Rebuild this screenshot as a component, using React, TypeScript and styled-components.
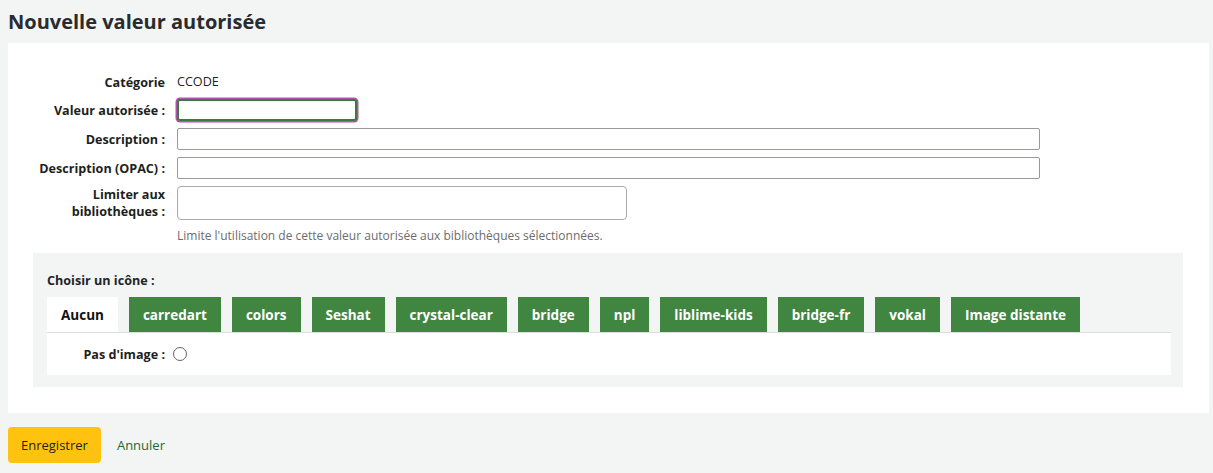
import React from 'react';
import styled, { createGlobalStyle } from 'styled-components';

const GlobalStyle = createGlobalStyle`
  html, body {
    margin: 0;
    padding: 0;
    background: #f3f4f4;
    font-family: 'Open Sans', 'DejaVu Sans', sans-serif;
    color: #212529;
  }
  * {
    box-sizing: border-box;
  }
`;

const Page = styled.div`
  padding: 0 4px 0 8px;
`;

const Title = styled.h1`
  margin: 0;
  padding: 8px 0 0;
  height: 43px;
  font-size: 20px;
  font-weight: 700;
  color: #282c2f;
`;

const Panel = styled.div`
  background: #ffffff;
  padding: 29px 0 26px;
`;

const FieldList = styled.ol`
  list-style: none;
  margin: 0;
  padding: 0;
`;

const Field = styled.li`
  display: flex;
  align-items: center;
  margin-bottom: 7px;

  &:last-child {
    margin-bottom: 0;
  }
`;

const Label = styled.label`
  flex: 0 0 157px;
  margin-right: 12px;
  text-align: right;
  font-size: 12.6px;
  font-weight: 700;
  line-height: 17px;
  color: #1d1f21;
`;

const Value = styled.span`
  font-size: 12.6px;
  line-height: 20px;
`;

const TextInput = styled.input<{ $width: number; $focused?: boolean }>`
  width: ${p => p.$width}px;
  height: 22px;
  margin: 0;
  padding: 2px 4px;
  border: 1px solid #9a96a4;
  border-radius: 2px;
  font: inherit;
  font-size: 12px;
  background: #fff;
  ${p =>
    p.$focused &&
    `
    border: 2px solid #3d7a3d;
    border-radius: 3px;
    box-shadow: 0 0 0 1.5px #b252b2;
    outline: none;
  `}
`;

const MultiSelect = styled.div`
  width: 450px;
  height: 34px;
  border: 1px solid #aaa;
  border-radius: 4px;
  background: #fff;
`;

const Hint = styled.div`
  margin: 8px 0 0 169px;
  font-size: 12px;
  color: #6c6c6c;
  line-height: 16px;
`;

const IconChooser = styled.fieldset`
  margin: 9px 26px 0 25px;
  padding: 19px 12px 12px 14px;
  border: 0;
  background: #f3f4f4;
`;

const ChooserTitle = styled.div`
  font-size: 12.6px;
  font-weight: 700;
  line-height: 17px;
  margin-bottom: 8px;
`;

const TabList = styled.ul`
  display: flex;
  gap: 11px;
  margin: 0;
  padding: 0;
  list-style: none;
  border-bottom: 1px solid #dcdfe0;
`;

const Tab = styled.li<{ $active?: boolean }>`
  height: 35px;
  padding: 0 14px;
  display: flex;
  align-items: center;
  font-size: 13.5px;
  font-weight: 700;
  color: ${p => (p.$active ? '#111' : '#fff')};
  background: ${p => (p.$active ? '#fff' : '#408540')};
`;

const TabPanel = styled.div`
  background: #fff;
  height: 42px;
  display: flex;
  align-items: center;
`;

const ChoiceLabel = styled(Label)`
  flex-basis: 118px;
  margin-right: 8px;
`;

const Radio = styled.span`
  width: 14px;
  height: 14px;
  border: 1px solid #666;
  border-radius: 50%;
  background: #fff;
`;

const Actions = styled.div`
  display: flex;
  align-items: center;
  gap: 16px;
  padding: 14px 0;
`;

const SaveButton = styled.button`
  height: 36px;
  padding: 0 13px;
  border: 0;
  border-radius: 4px;
  background: #ffc20e;
  color: #212529;
  font: inherit;
  font-size: 13px;
`;

const CancelLink = styled.a`
  color: #1b6b33;
  font-size: 13px;
  text-decoration: none;
`;

const iconSets = [
  'Aucun',
  'carredart',
  'colors',
  'Seshat',
  'crystal-clear',
  'bridge',
  'npl',
  'liblime-kids',
  'bridge-fr',
  'vokal',
  'Image distante',
];

export default function App() {
  return (
    <Page>
      <GlobalStyle />
      <Title>Nouvelle valeur autorisée</Title>
      <Panel>
        <FieldList>
          <Field>
            <Label>Catégorie</Label>
            <Value>CCODE</Value>
          </Field>
          <Field>
            <Label>Valeur autorisée :</Label>
            <TextInput $width={180} $focused />
          </Field>
          <Field>
            <Label>Description :</Label>
            <TextInput $width={863} />
          </Field>
          <Field>
            <Label>Description (OPAC) :</Label>
            <TextInput $width={863} />
          </Field>
          <Field>
            <Label>
              Limiter aux
              <br />
              bibliothèques :
            </Label>
            <MultiSelect />
          </Field>
        </FieldList>
        <Hint>Limite l'utilisation de cette valeur autorisée aux bibliothèques sélectionnées.</Hint>
        <IconChooser>
          <ChooserTitle>Choisir un icône :</ChooserTitle>
          <TabList>
            {iconSets.map((name, i) => (
              <Tab key={name} $active={i === 0}>
                {name}
              </Tab>
            ))}
          </TabList>
          <TabPanel>
            <ChoiceLabel>Pas d'image :</ChoiceLabel>
            <Radio />
          </TabPanel>
        </IconChooser>
      </Panel>
      <Actions>
        <SaveButton>Enregistrer</SaveButton>
        <CancelLink href="#">Annuler</CancelLink>
      </Actions>
    </Page>
  );
}
